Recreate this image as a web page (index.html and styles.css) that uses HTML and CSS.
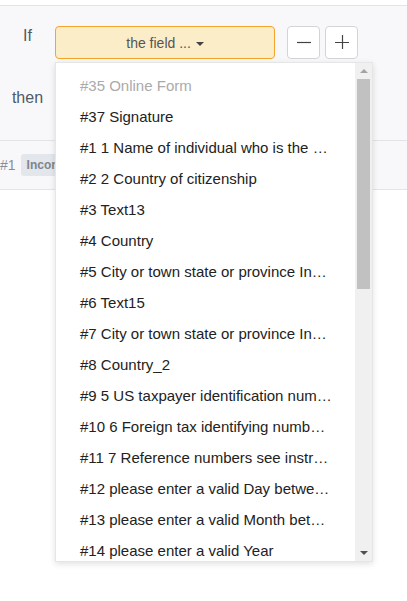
FILE: index.html
```html
<!DOCTYPE html>
<html lang="en">
<head>
    <meta charset="UTF-8">
    <title>Rules</title>
    <link rel="stylesheet" href="styles.css">
</head>
<body>

<div class="rule-box">
    <div class="rule-row">
        <span class="rule-label">If</span>
        <div class="field-wrap">
            <button class="field-btn">the field ... <span class="caret"></span></button>

            <!-- выпадающий список полей -->
            <div class="field-menu">
                <ul class="field-list">
                    <li class="disabled">#35 Online Form</li>
                    <li>#37 Signature</li>
                    <li>#1 1 Name of individual who is the beneficial owner</li>
                    <li>#2 2 Country of citizenship</li>
                    <li>#3 Text13</li>
                    <li>#4 Country</li>
                    <li>#5 City or town state or province Include postal code</li>
                    <li>#6 Text15</li>
                    <li>#7 City or town state or province Include postal code</li>
                    <li>#8 Country_2</li>
                    <li>#9 5 US taxpayer identification number SSN or ITIN</li>
                    <li>#10 6 Foreign tax identifying number see instructions</li>
                    <li>#11 7 Reference numbers see instructions</li>
                    <li>#12 please enter a valid Day between 1 and 31</li>
                    <li>#13 please enter a valid Month between 1 and 12</li>
                    <li>#14 please enter a valid Year</li>
                    <li>#15 Signature of beneficial owner</li>
                </ul>
                <div class="scrollbar">
                    <span class="arrow up"></span>
                    <div class="track"><div class="thumb"></div></div>
                    <span class="arrow down"></span>
                </div>
            </div>
        </div>
        <div class="step-btns">
            <button class="step-btn" title="Remove">
                <svg width="14" height="14" viewBox="0 0 14 14"><path d="M0 7.5h14" stroke="#444" stroke-width="1.2"/></svg>
            </button>
            <button class="step-btn" title="Add">
                <svg width="14" height="14" viewBox="0 0 14 14"><path d="M0 7.5h14M7.5 0v14" stroke="#444" stroke-width="1.2"/></svg>
            </button>
        </div>
    </div>

    <div class="rule-row then-row">
        <span class="rule-label">then</span>
        <div class="field-wrap">
            <button class="field-btn"></button>
        </div>
    </div>
</div>

<div class="rule-item">
    <span class="rule-num">#1</span>
    <span class="badge">Incomplete</span>
</div>

</body>
</html>
```

FILE: styles.css
```css
/* Общие стили */
html, body {
    margin: 0;
    padding: 0;
    background-color: #ffffff;
    font-family: "Liberation Sans", Arial, sans-serif;
}

html {
    min-height: 601px;
}

body {
    padding-top: 5px;
    min-height: 596px;
}

/* Блок условия */
.rule-box {
    background-color: #f8f8fb;
    border-top: 1px solid #e4e4e8;
    padding: 20px 0 19px;
}

.rule-row {
    display: flex;
    align-items: center;
    height: 33px;
}

.then-row {
    margin-top: 29px;
}

.rule-label {
    width: 55px;
    text-align: center;
    font-size: 16px;
    color: #4f5a65;
    position: relative;
    top: -7px;
}

.field-wrap {
    position: relative;
    width: 220px;
    height: 33px;
}

.field-btn {
    width: 100%;
    height: 33px;
    box-sizing: border-box;
    background-color: #fcedc9;
    border: 1px solid #f5a52b;
    border-radius: 4px;
    font-family: inherit;
    font-size: 14px;
    color: #555555;
    padding: 0;
    cursor: pointer;
}

.caret {
    display: inline-block;
    width: 0;
    height: 0;
    border-left: 4px solid transparent;
    border-right: 4px solid transparent;
    border-top: 4px solid #444444;
    vertical-align: middle;
    margin-left: 1px;
}

.step-btns {
    display: flex;
    gap: 5px;
    margin-left: 12px;
}

.step-btn {
    width: 33px;
    height: 33px;
    box-sizing: border-box;
    display: flex;
    align-items: center;
    justify-content: center;
    background-color: #ffffff;
    border: 1px solid #d4d4d8;
    border-radius: 4px;
    padding: 0 0 1px;
    cursor: pointer;
}

/* Выпадающее меню */
.field-menu {
    position: absolute;
    top: 36px;
    left: 0;
    z-index: 10;
    width: 318px;
    height: 500px;
    display: flex;
    background-color: #ffffff;
    border: 1px solid #e6e6e6;
    box-sizing: border-box;
    box-shadow: 0 2px 6px rgba(0, 0, 0, 0.12);
    overflow: hidden;
}

.field-list {
    flex: 1;
    min-width: 0;
    list-style: none;
    margin: 0;
    padding: 7px 0 0;
}

.field-list li {
    height: 31px;
    line-height: 31px;
    padding: 0 22px 0 24px;
    font-size: 15px;
    color: #222222;
    white-space: nowrap;
    overflow: hidden;
    text-overflow: ellipsis;
}

.field-list li.disabled {
    color: #aaaaaa;
}

.scrollbar {
    width: 17px;
    display: flex;
    flex-direction: column;
    align-items: center;
    background-color: #f0f0f0;
}

.track {
    flex: 1;
    width: 100%;
    padding: 0 2px;
    box-sizing: border-box;
}

.thumb {
    height: 210px;
    background-color: #c1c1c1;
}

.arrow {
    width: 0;
    height: 0;
    border-left: 4px solid transparent;
    border-right: 4px solid transparent;
    margin: 6px 0;
}

.arrow.up {
    border-bottom: 4px solid #a3a3a3;
}

.arrow.down {
    border-top: 4px solid #505050;
}

/* Строка правила */
.rule-item {
    display: flex;
    align-items: center;
    gap: 5px;
    height: 48px;
    background-color: #f8f8fb;
    border-top: 1px solid #e4e4e8;
    border-bottom: 1px solid #e4e4e8;
}

.rule-num {
    font-size: 14px;
    color: #8a8f96;
}

.badge {
    background-color: #e3e6ea;
    color: #80858c;
    font-size: 12px;
    font-weight: bold;
    padding: 4px 6px;
    border-radius: 3px;
}
```
